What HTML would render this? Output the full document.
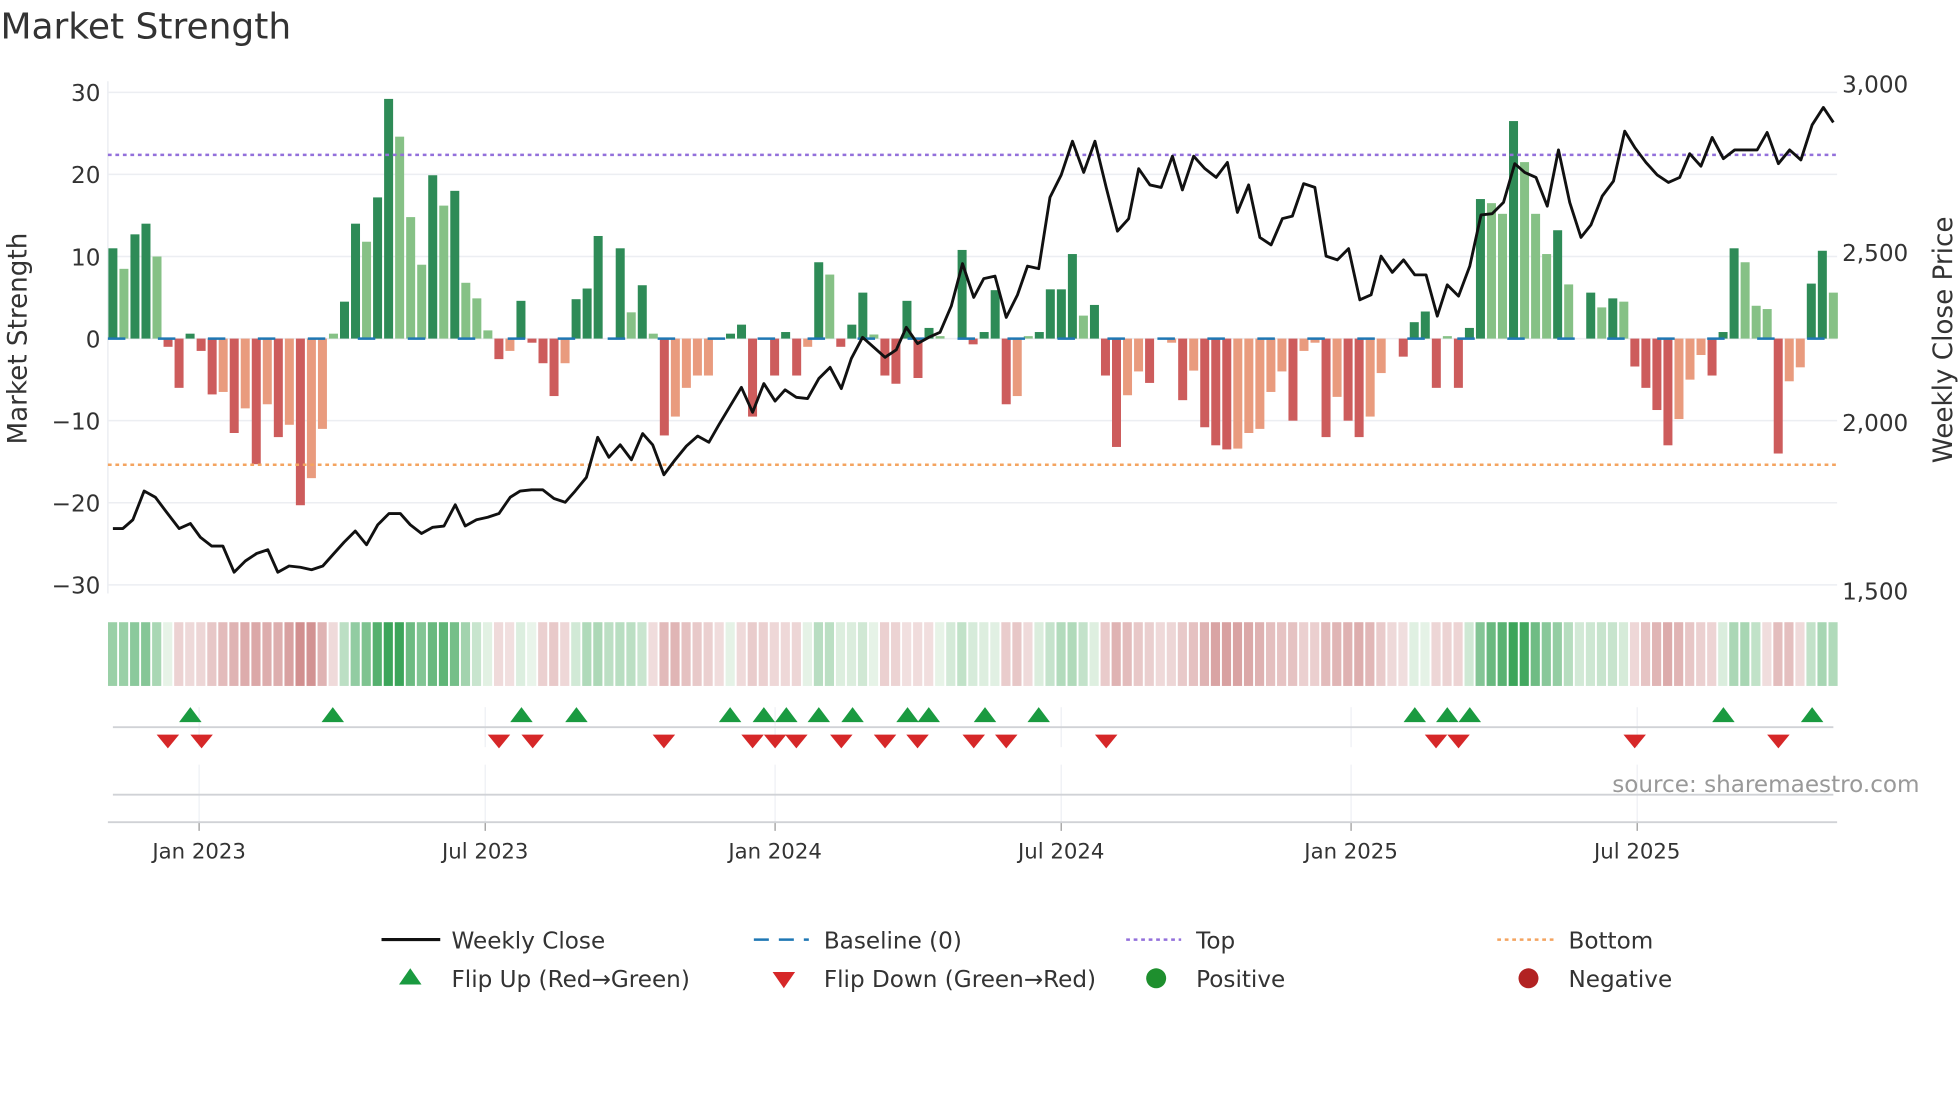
<!DOCTYPE html>
<html><head><meta charset="utf-8"><style>
html,body{margin:0;padding:0;background:#fff;width:1960px;height:1102px;overflow:hidden}
svg{display:block}
text{font-family:"DejaVu Sans","Liberation Sans",sans-serif;fill:#333}
</style></head><body>
<svg id="s" width="1960" height="1102" viewBox="0 0 1568 882" xmlns="http://www.w3.org/2000/svg">
<text x="0" y="31" font-size="28.8">Market Strength</text>
<g id="grid"></g>
<g id="bars"></g>
<g id="heat"></g>
<g id="price"></g>
<g id="marks"></g>
<text x="1536" y="634" font-size="18.5" text-anchor="end" style="fill:#999">source: sharemaestro.com</text>
<text transform="translate(21,271) rotate(-90)" font-size="21" text-anchor="middle">Market Strength</text>
<text transform="translate(1562,272) rotate(-90)" font-size="21" text-anchor="middle">Weekly Close Price</text>
<g font-size="18.5">
<line x1="305" y1="752" x2="352" y2="752" stroke="#111" stroke-width="2.5"/>
<text x="361" y="759">Weekly Close</text>
<line x1="603" y1="752" x2="647" y2="752" stroke="#1f77b4" stroke-width="2" stroke-dasharray="12,8"/>
<text x="659" y="759">Baseline (0)</text>
<line x1="901" y1="752" x2="945" y2="752" stroke="#9370db" stroke-width="2" stroke-dasharray="3,3"/>
<text x="957" y="759">Top</text>
<line x1="1198" y1="752" x2="1243" y2="752" stroke="#f4a460" stroke-width="2" stroke-dasharray="3,3"/>
<text x="1255" y="759">Bottom</text>
<polygon points="319,788 337,788 328,775" fill="#1a9a40"/>
<text x="361" y="790">Flip Up (Red→Green)</text>
<polygon points="618,778 636,778 627,791" fill="#d62728"/>
<text x="659" y="790">Flip Down (Green→Red)</text>
<circle cx="925" cy="783" r="8" fill="#1e8f2e"/>
<text x="957" y="790">Positive</text>
<circle cx="1223" cy="783" r="8" fill="#b22222"/>
<text x="1255" y="790">Negative</text>
</g>
</svg>
<script>
var NS="http://www.w3.org/2000/svg";
function el(p,t,a,txt){var e=document.createElementNS(NS,t);for(var k in a)e.setAttribute(k,a[k]);if(txt!=null)e.textContent=txt;document.getElementById(p).appendChild(e);return e;}
function Y(v){return 271-v*6.57;}
[30,20,10,0,-10,-20,-30].forEach(function(v){
 el('grid','line',{x1:86,x2:1470,y1:Y(v),y2:Y(v),stroke:'#eceef2','stroke-width':1.2});
 el('grid','text',{x:80,y:Y(v)+7,'font-size':18.5,'text-anchor':'end'},(v<0?'\u2212'+(-v):''+v));
});
el('grid','line',{x1:86,x2:86,y1:65,y2:475,stroke:'#eceef2','stroke-width':1.2});
[[3000,67],[2500,202],[2000,338],[1500,473]].forEach(function(p){
 el('grid','text',{x:1474,y:p[1]+7,'font-size':18.5},p[0].toLocaleString('en-US'));});
[159,388,620,849,1081,1310].forEach(function(x,i){
 el('grid','line',{x1:x,x2:x,y1:566,y2:598,stroke:'#eef0f4','stroke-width':1});
 el('grid','line',{x1:x,x2:x,y1:612,y2:658,stroke:'#eef0f4','stroke-width':1});
 el('grid','line',{x1:x,x2:x,y1:658,y2:665,stroke:'#999','stroke-width':1});
 el('grid','text',{x:x,y:687,'font-size':17,'text-anchor':'middle'},['Jan 2023','Jul 2023','Jan 2024','Jul 2024','Jan 2025','Jul 2025'][i]);
});
el('grid','line',{x1:90,x2:1467,y1:582,y2:582,stroke:'#d0d2d6','stroke-width':1.5});
el('grid','line',{x1:90,x2:1467,y1:636,y2:636,stroke:'#d0d2d6','stroke-width':1.5});
el('grid','line',{x1:86,x2:1470,y1:658,y2:658,stroke:'#d0d2d6','stroke-width':1.5});
var B="11D 8.5L 12.7D 14D 10L -1R -6R 0.6D -1.5R -6.8R -6.5S -11.5R -8.5S -15.3R -8S -12R -10.5S -20.3R -17S -11S 0.6L 4.5D 14D 11.8L 17.2D 29.2D 24.6L 14.8L 9L 19.9D 16.2L 18D 6.8L 4.9L 1L -2.5R -1.5S 4.6D -0.5R -3R -7R -3S 4.8D 6.1D 12.5D 0D 11D 3.2L 6.5D 0.6L -11.8R -9.5S -6S -4.5S -4.5S 0D 0.6D 1.7D -9.5R 0D -4.5R 0.8D -4.5R -1S 9.3D 7.8L -1R 1.7D 5.6D 0.5L -4.5R -5.5R 4.6D -4.8R 1.3D 0.3L 0D 10.8D -0.7R 0.8D 5.9D -8R -7S 0.3L 0.8D 6D 6D 10.3D 2.8L 4.1D -4.5R -13.2R -6.9S -4S -5.4R 0D -0.5S -7.5R -3.9S -10.8R -13R -13.5R -13.4S -11.5S -11S -6.5S -4S -10R -1.5S -0.5S -12R -7.1S -10R -12R -9.5S -4.2S 0D -2.2R 2D 3.3D -6R 0.3L -6R 1.3D 17D 16.5L 15.2L 26.5D 21.5L 15.2L 10.3L 13.2D 6.6L 0L 5.6D 3.8L 4.9D 4.5L -3.4R -6R -8.7R -13R -9.8S -5S -2S -4.5R 0.8D 11D 9.3L 4L 3.6L -14R -5.2S -3.5S 6.7D 10.7D 5.6L".split(' ');
var col={D:'#2e8b57',L:'#86c186',R:'#cd5c5c',S:'#e99b7e'};
var n=B.length,step=(1467-90)/(n-1),vals=[];
B.forEach(function(s,i){var v=parseFloat(s),t=s.slice(-1);vals.push(v);var x=90+i*step;
 if(v!=0)el('bars','rect',{x:x-3.6,width:7.2,y:Math.min(Y(0),Y(v)),height:Math.abs(v*6.57),fill:col[t]});});
el('bars','line',{x1:86,x2:1470,y1:271,y2:271,stroke:'#1f77b4','stroke-width':2,'stroke-dasharray':'14,26'});
el('bars','line',{x1:86,x2:1470,y1:124,y2:124,stroke:'#9370db','stroke-width':2,'stroke-dasharray':'3,3'});
el('bars','line',{x1:86,x2:1470,y1:372,y2:372,stroke:'#f4a460','stroke-width':2,'stroke-dasharray':'3,3'});
for(var i=0;i<n;i++){var a=0,c=0;for(var j=i-1;j<=i+1;j++)if(j>=0&&j<n){a+=vals[j]*(j==i?2:1);c+=(j==i?2:1);}a/=c;
 var f=Math.min(1,Math.abs(a)/22),r,g,b;
 if(a>=0){r=235-(235-60)*f;g=245-(245-165)*f;b=235-(235-90)*f;}else{r=242-(242-200)*f;g=225-(225-120)*f;b=225-(225-120)*f;}
 el('heat','rect',{x:90+i*step-step/2+0.5,width:step-1.5,y:498,height:51,fill:'rgb('+(r|0)+','+(g|0)+','+(b|0)+')'});}
var P="90,423 98,423 106,416 115,393 124,398 133,410 143,423 152,419 160,430 169,437 178,437 187,458 196,449 205,443 214,440 222,458 231,453 240,454 249,456 258,453 266,444 275,434 284,425 293,436 302,420 311,411 320,411 328,420 337,427 346,422 355,421 364,404 372,421 381,416 390,414 399,411 408,398 416,393 425,392 434,392 443,399 452,402 460,393 469,382 478,350 487,366 496,356 505,368 514,347 522,356 531,380 540,368 549,357 558,349 567,354 575,340 584,325 593,310 602,330 611,307 620,321 628,312 637,318 646,319 655,303 664,294 673,311 681,287 690,270 699,278 708,286 717,280 725,262 734,275 743,270 752,266 761,245 770,211 779,238 787,223 796,221 805,254 814,236 822,213 831,215 840,158 849,140 858,113 867,138 876,113 885,150 894,185 903,175 911,135 920,148 929,150 938,125 946,152 955,125 964,135 973,142 982,130 990,170 999,148 1008,190 1017,196 1026,175 1034,173 1043,147 1052,150 1061,205 1070,208 1079,199 1088,240 1097,236 1105,205 1114,218 1123,208 1132,220 1141,220 1150,253 1158,228 1167,237 1176,213 1185,172 1194,171 1203,162 1212,131 1220,138 1229,142 1238,165 1247,120 1256,162 1265,190 1273,180 1282,157 1291,145 1300,105 1308,118 1317,130 1326,140 1335,146 1344,142 1352,123 1361,133 1370,110 1379,127 1388,120 1397,120 1406,120 1414,106 1423,131 1432,120 1441,128 1450,100 1459,86 1467,98";
el('price','polyline',{points:P,fill:'none',stroke:'#111','stroke-width':2.3,'stroke-linejoin':'round'});
[152,266,417,461,584,611,629,655,682,726,743,788,831,1132,1158,1176,1379,1450].forEach(function(x){
 el('marks','polygon',{points:(x-9)+',578 '+(x+9)+',578 '+x+',566',fill:'#1a9a40'});});
[134,161,399,426,531,602,620,637,673,708,734,779,805,885,1149,1167,1308,1423].forEach(function(x){
 el('marks','polygon',{points:(x-9)+',588 '+(x+9)+',588 '+x+',599',fill:'#d62728'});});
</script>
</body></html>
